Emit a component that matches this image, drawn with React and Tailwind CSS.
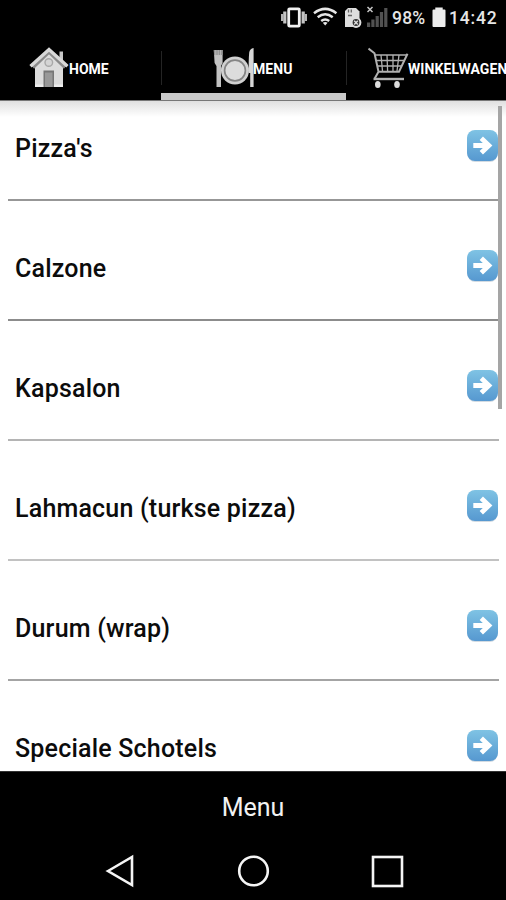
const CATEGORIES = [
  { name: "Pizza's", line: 'bg-[#979797]' },
  { name: 'Calzone', line: 'bg-[#8c8c8c]' },
  { name: 'Kapsalon', line: 'bg-[#b4b4b4]' },
  { name: 'Lahmacun (turkse pizza)', line: 'bg-[#c2c2c2]' },
  { name: 'Durum (wrap)', line: 'bg-[#a4a4a4]' },
  { name: 'Speciale Schotels', line: 'bg-[#979797]' },
]

function StatusBar() {
  return (
    <div className="flex h-9 flex-shrink-0 items-center text-[17.5px] font-medium text-[#e6e6e6]">
      <svg className="ml-[270px] flex-shrink-0" width="120" height="36" viewBox="0 0 120 36" fill="none">
        {/* vibrate */}
        <rect x="18.7" y="8.8" width="10.6" height="17.4" rx="1" stroke="#f0f0f0" strokeWidth="2.8" />
        <path d="M14.8 11.5v12M33.2 11.5v12" stroke="#c4c4c4" strokeWidth="3.2" />
        <path d="M12.2 14v7M35.8 14v7" stroke="#b4b4b4" strokeWidth="2.4" />
        {/* wifi */}
        <g stroke="#e6e6e6" strokeWidth="2.5">
          <path d="M44 13.2q11.2-8.6 22.4 0" />
          <path d="M47.7 17.2q7.5-5.8 15 0" />
          <path d="M51.2 21q4-3.1 8 0" />
        </g>
        <path d="M52.8 22.8q2.4-1.7 4.8 0L55.2 25.5z" fill="#e6e6e6" />
        {/* sim card */}
        <path d="M78 8h8l3.5 3.5V27H75V11z" fill="#dedede" />
        <path d="M78.5 9.5v3M81.3 9.5v3M78 15.5h4" stroke="#666" strokeWidth="1.3" />
        <circle cx="86" cy="22.5" r="4.4" fill="#333" stroke="#dedede" strokeWidth="2" />
        <path d="M84.2 20.8l3.6 3.6M87.8 20.8l-3.6 3.6" stroke="#dedede" strokeWidth="1.4" />
        {/* signal */}
        <path d="M97.5 7l5 5M102.5 7l-5 5" stroke="#c4c4c4" strokeWidth="1.5" />
        <g fill="#525252">
          <rect x="97" y="22.5" width="3.2" height="4.5" />
          <rect x="101.3" y="19.5" width="3.2" height="7.5" />
          <rect x="105.6" y="16" width="3.2" height="11" />
          <rect x="109.9" y="12" width="3.2" height="15" />
          <rect x="114.2" y="8" width="3.2" height="19" />
        </g>
      </svg>
      <span className="ml-[2px] w-[40px] tracking-[0.2px]">98%</span>
      <svg className="flex-shrink-0" width="14" height="36" viewBox="0 0 14 36">
        <path d="M3.3 7.5h7.4v2h1.8q1 0 1 1V26q0 1-1 1h-11q-1 0-1-1V10.5q0-1 1-1h1.8z" fill="#ececec" />
      </svg>
      <span className="ml-[3px] tracking-[0.8px]">14:42</span>
    </div>
  )
}

function HouseIcon() {
  return (
    <svg className="flex-shrink-0" width="40" height="42" viewBox="0 0 40 42">
      <path d="M30.5 4.5h3.5v12l-3.5-3z" fill="#c8c8c8" />
      <path d="M6 19.5L20 6l14 13.5V40H6z" fill="#dcdcdc" />
      <path d="M6 37.5h28V40H6z" fill="#ededed" />
      <path d="M4 20.5L20 5.2l16 15.3" fill="none" stroke="#8a8a8a" strokeWidth="3.2" />
      <path d="M1.5 19.2L20 2.6 38.5 19.2" fill="none" stroke="#d8d8d8" strokeWidth="3.4" />
      <circle cx="19.8" cy="15.5" r="3.8" fill="#d4d4d4" stroke="#a8a8a8" strokeWidth="1.4" />
      <path d="M14.5 23.5h10.5V40H14.5z" fill="#777" />
      <path d="M16 25.5h7.5V40H16z" fill="#999" />
    </svg>
  )
}

function PlateIcon() {
  return (
    <svg className="flex-shrink-0" width="42" height="42" viewBox="0 0 42 42">
      <path d="M.8 3h8.8v13l-1.6 3V40H3.5V19L1.6 16z" fill="#c2c2c2" />
      <path d="M.8 3h8.8v5H1z" fill="#929292" />
      <path d="M2.8 3v6M5.2 3v6M7.6 3v6" stroke="#bdbdbd" strokeWidth=".9" />
      <circle cx="22" cy="23.5" r="14" fill="#d0d0d0" />
      <circle cx="22" cy="23.5" r="10.4" fill="#dcdcdc" stroke="#858585" strokeWidth="1.7" />
      <path d="M36.2 5.5q.6-4 4.4-4.5V40h-3.4V26h-1.4q-.4-12 .4-20.5z" fill="#d6d6d6" />
    </svg>
  )
}

function CartIcon() {
  return (
    <svg className="flex-shrink-0" width="42" height="42" viewBox="0 0 42 42" fill="none" stroke="#b0b0b0">
      <path d="M.5 1.5l6 4.7 4 18.5h20.5L39.5 6.8M10.5 24.7L6.7 31.5" strokeWidth="2" />
      <path d="M5.5 32h30.5" strokeWidth="2.4" />
      <path d="M7 8h32M8.2 13.5h28.6M9.2 19h24.5" strokeWidth="1.3" />
      <path d="M13 8l1.5 16M19 8l.6 16M25 8v16M31 8l-2 16" strokeWidth="1.3" />
      <g fill="#dedede" stroke="none">
        <ellipse cx="9.8" cy="37.5" rx="2.8" ry="3.5" />
        <ellipse cx="29" cy="37.5" rx="2.8" ry="3.5" />
      </g>
    </svg>
  )
}

function TabBar() {
  return (
    <div className="flex h-16 flex-shrink-0 overflow-hidden text-[14px] leading-none font-bold text-white">
      <div className="flex h-16 w-[161px] flex-shrink-0 items-start pt-[11px] pl-[29px]">
        <HouseIcon />
        <span className="mt-[15px]">HOME</span>
      </div>
      <div className="flex h-16 w-[185px] flex-shrink-0 flex-col">
        <div className="relative flex h-[57px] items-start pt-[11px] pl-[52px]">
          <span className="absolute top-[15px] left-0 h-[34px] w-px bg-[#242424]" />
          <PlateIcon />
          <span className="mt-[15px] ml-[-2px] tracking-[0.1px]">MENU</span>
        </div>
        <div className="h-2 flex-1 bg-[#c9c9c9]" />
      </div>
      <div className="relative flex h-16 w-[185px] flex-shrink-0 items-start pt-[11px] pl-[22px]">
        <span className="absolute top-[15px] left-0 h-[34px] w-px bg-[#242424]" />
        <CartIcon />
        <span className="mt-[15px] ml-[-2px] tracking-[0.1px]">WINKELWAGEN</span>
      </div>
    </div>
  )
}

function ArrowIcon() {
  return (
    <svg className="flex-shrink-0" width="32" height="34" viewBox="0 0 32 34">
      <defs>
        <linearGradient id="arrowBg" x1="0" y1="0" x2="0" y2="1">
          <stop offset="0" stopColor="#7fc3e4" />
          <stop offset="1" stopColor="#5698d0" />
        </linearGradient>
      </defs>
      <rect x=".5" y="3" width="30" height="30" rx="7.5" fill="#d3dbe2" />
      <rect x="0" y="1" width="31" height="31" rx="8" fill="url(#arrowBg)" />
      <path d="M6.3 16.5h15M14.3 9.3l7.6 7.2-7.6 7.2" fill="none" stroke="#fff" strokeWidth="4.8" />
    </svg>
  )
}

function CategoryRow({ name, line }) {
  return (
    <li className="flex h-[120px] flex-shrink-0 flex-col">
      <div className="flex flex-1 items-center justify-between pt-[12px] pl-[7px]">
        <span className="pt-[5px] text-[25px] leading-8 font-medium tracking-[0.2px] whitespace-nowrap text-[#0c0c0c]">
          {name}
        </span>
        <ArrowIcon />
      </div>
      <div className={`h-[2px] ${line}`} />
    </li>
  )
}

export default function App() {
  return (
    <div className="flex h-[900px] w-[506px] flex-col overflow-hidden bg-black font-['Roboto',sans-serif]">
      <StatusBar />
      <TabBar />

      <main className="relative h-[671px] flex-shrink-0 overflow-hidden border-t border-[#777] bg-white">
        <div className="absolute top-0 left-0 h-4 w-full bg-linear-to-b from-[#e0e0e0] to-white" />
        <ul className="relative mt-[-20px] flex flex-col pr-[7px] pl-[8px]">
          {CATEGORIES.map(c => (
            <CategoryRow key={c.name} name={c.name} line={c.line} />
          ))}
        </ul>
        {/* scroll thumb */}
        <div className="absolute top-[5px] right-[4.5px] h-[303px] w-[3.5px] bg-[#a5a5a5]" />
      </main>

      <footer className="flex flex-1 flex-col items-center border-t border-[#333]">
        <div className="pt-[20px] text-[25px] leading-8 text-[#f2f2f2]">Menu</div>
        <svg className="mt-[25px]" width="506" height="44" viewBox="0 0 506 44" fill="none" stroke="#f5f5f5" strokeWidth="2.6">
          <path d="M108 22l24-14v28z" />
          <circle cx="253.5" cy="22" r="14.3" />
          <rect x="373" y="8" width="29" height="29" />
        </svg>
      </footer>
    </div>
  )
}
